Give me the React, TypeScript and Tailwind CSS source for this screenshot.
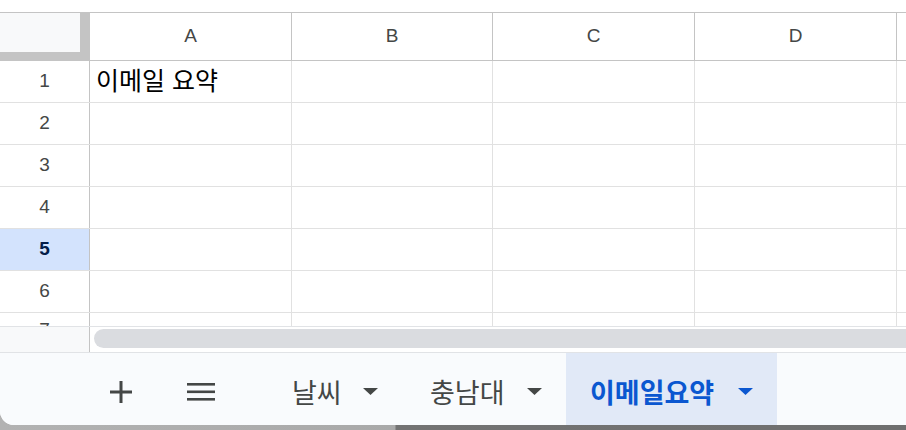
import React from 'react';

const COLS = [
  { label: 'A', w: 'w-[202px]' },
  { label: 'B', w: 'w-[201px]' },
  { label: 'C', w: 'w-[202px]' },
  { label: 'D', w: 'w-[202px]' },
];

const ROWS = [1, 2, 3, 4, 5, 6];

const Caret = ({ color }: { color: string }) => (
  <svg width="15" height="7" viewBox="0 0 15 7" className="shrink-0">
    <path d="M0 0 L15 0 L7.5 7 Z" fill={color} />
  </svg>
);

const Row = ({ n, selected }: { n: number; selected?: boolean }) => (
  <div className="flex h-[42px] border-b border-[#e1e1e1]">
    <div
      className={
        'w-[90px] shrink-0 flex items-center justify-center border-r border-[#c4c4c4] text-[19px] font-["Liberation_Sans",Arial,sans-serif] ' +
        (selected ? 'bg-[#d3e3fd] text-[#041e49] font-bold' : 'bg-white text-[#444746]')
      }
    >
      {n}
    </div>
    {COLS.map((c) => (
      <div key={c.label} className={`${c.w} shrink-0 border-r border-[#e1e1e1] flex items-center pl-[6px]`}>
        {n === 1 && c.label === 'A' ? (
          <span className="text-[25px] leading-none text-black font-['Liberation_Sans','Noto_Sans_CJK_KR',sans-serif]">이메일 요약</span>
        ) : null}
      </div>
    ))}
    <div className="flex-1" />
  </div>
);

export default function App() {
  return (
    <div className="w-[906px] h-[430px] overflow-hidden flex flex-col bg-[linear-gradient(to_right,#b2b2b2_0px,#a9a9a9_395px,#737373_396px,#6f6f6f_906px)]">
      <div className="h-[425px] shrink-0 bg-white rounded-bl-[14px] overflow-hidden flex flex-col">
        {/* top strip */}
        <div className="h-[12px] shrink-0 bg-white" />

        {/* column headers */}
        <div className="flex h-[49px] shrink-0 border-y border-[#c4c4c4]">
          <div className="w-[90px] shrink-0 bg-[#c4c4c4] border-r border-[#c4c4c4]">
            <div className="w-[80px] h-[39px] bg-[#f8f9fa]" />
          </div>
          {COLS.map((c) => (
            <div
              key={c.label}
              className={`${c.w} shrink-0 border-r border-[#c4c4c4] flex items-center justify-center text-[19px] text-[#444746] font-["Liberation_Sans",Arial,sans-serif]`}
            >
              {c.label}
            </div>
          ))}
          <div className="flex-1" />
        </div>

        {/* rows */}
        {ROWS.map((n) => (
          <Row key={n} n={n} selected={n === 5} />
        ))}

        {/* partial row 7 */}
        <div className="h-[13px] shrink-0 overflow-hidden flex">
          <div className="w-[90px] shrink-0 border-r border-[#c4c4c4]">
            <div className="h-[35px] flex items-center justify-center text-[19px] text-[#444746] font-['Liberation_Sans',Arial,sans-serif]">7</div>
          </div>
          {COLS.map((c) => (
            <div key={c.label} className={`${c.w} shrink-0 border-r border-[#e1e1e1]`} />
          ))}
        </div>

        {/* horizontal scrollbar */}
        <div className="h-[27px] shrink-0 flex border-y border-[#e1e3e6] bg-white">
          <div className="w-[90px] shrink-0 bg-[#f8f9fa] border-r border-[#c4c4c4]" />
          <div className="flex-1 pl-[4px] pt-[2px] -mr-4">
            <div className="h-[19px] rounded-full bg-[#dadce0]" />
          </div>
        </div>

        {/* sheet tabs */}
        <div className="h-[72px] shrink-0 bg-[#f9fbfd] flex items-stretch pl-[101px] font-['Noto_Sans_CJK_KR','Liberation_Sans',sans-serif]">
          <div className="w-[40px] flex items-center justify-center pt-[5px]">
            <svg width="22" height="22" viewBox="0 0 22 22">
              <rect x="9.5" y="0" width="3" height="22" fill="#444746" />
              <rect x="0" y="9.5" width="22" height="3" fill="#444746" />
            </svg>
          </div>
          <div className="w-[40px] ml-[40px] flex items-center justify-center pt-[5px]">
            <svg width="28" height="18" viewBox="0 0 28 18">
              <rect x="0" y="0" width="28" height="2.6" fill="#444746" />
              <rect x="0" y="7.5" width="28" height="2.6" fill="#444746" />
              <rect x="0" y="15" width="28" height="2.6" fill="#444746" />
            </svg>
          </div>
          <div className="w-[134px] ml-[47px] flex items-center justify-between pl-[24px] pr-[24px] pt-[5px] text-[27px] leading-none text-[#444746]">
            <span>날씨</span>
            <Caret color="#444746" />
          </div>
          <div className="w-[164px] flex items-center justify-between pl-[28px] pr-[24px] pt-[5px] text-[27px] leading-none text-[#444746]">
            <span>충남대</span>
            <Caret color="#444746" />
          </div>
          <div className="w-[211px] flex items-center justify-between pl-[24px] pr-[24px] pt-[5px] bg-[#e1e9f7] text-[27px] leading-none font-bold text-[#0b57d0]">
            <span>이메일요약</span>
            <Caret color="#0b57d0" />
          </div>
        </div>
      </div>
    </div>
  );
}
